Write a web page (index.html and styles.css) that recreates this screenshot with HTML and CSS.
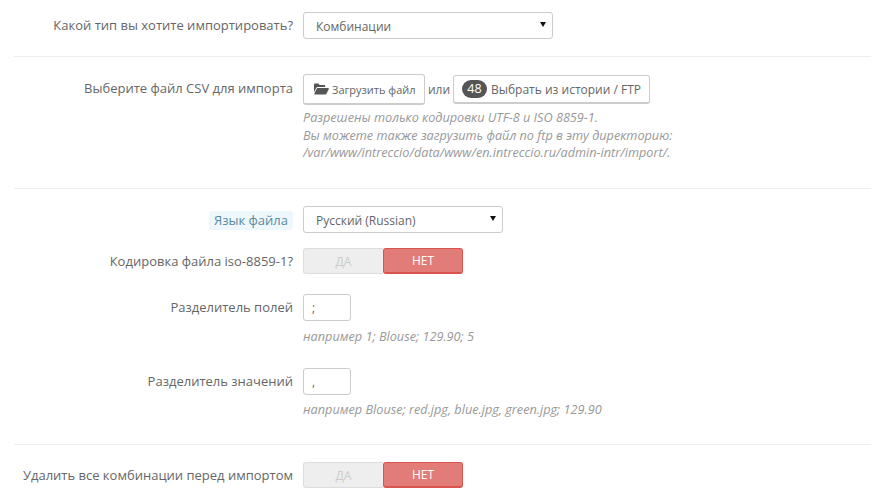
FILE: index.html
```html
<!DOCTYPE html>
<html lang="ru">
<head>
    <meta charset="UTF-8">
    <title>Импорт CSV</title>
    <link rel="stylesheet" href="styles.css">
</head>
<body>

<form class="import-form">
    <div class="row row-first">
        <label class="label">Какой тип вы хотите импортировать?</label>
        <div class="control">
            <div class="select select-wide"><span>Комбинации</span><i class="caret"></i></div>
        </div>
    </div>

    <hr class="divider divider-top">

    <div class="row">
        <label class="label label-file">Выберите файл CSV для импорта</label>
        <div class="control">
            <div class="file-actions">
                <button type="button" class="btn btn-upload">
                    <svg class="folder-icon" width="15" height="12" viewBox="0 0 15 12"><path d="M0 1.6C0 .9.5.5 1.1.5h3c.6 0 1 .4 1.1 1l.1.4h4.900c.6 0 1 .4 1 1V4H3.700C3 4 2.500 4.300 2.200 4.900L0 9.300zM3.600 5h10.500c.6 0 1 .6.700 1.100l-2.300 4.600c-.2.400-.6.800-1.200.8H1c-.6 0-.9-.6-.6-1.100l2.200-4.500C2.800 5.300 3.200 5 3.600 5z" fill="#555"/></svg>
                    Загрузить файл
                </button>
                <span class="or">или</span>
                <button type="button" class="btn btn-history"><span class="badge">48</span> Выбрать из истории / FTP</button>
            </div>
            <p class="help help-file">Разрешены только кодировки UTF-8 и ISO 8859-1.<br>Вы можете также загрузить файл по ftp в эту директорию:<br>/var/www/intreccio/data/www/en.intreccio.ru/admin-intr/import/.</p>
        </div>
    </div>

    <hr class="divider divider-middle">

    <div class="row row-lang">
        <label class="label"><span class="hint">Язык файла</span></label>
        <div class="control">
            <div class="select select-lang"><span>Русский (Russian)</span><i class="caret"></i></div>
        </div>
    </div>

    <div class="row row-iso">
        <label class="label">Кодировка файла iso-8859-1?</label>
        <div class="control">
            <div class="switch"><span class="switch-yes">ДА</span><span class="switch-no">НЕТ</span></div>
        </div>
    </div>

    <div class="row row-sep">
        <label class="label">Разделитель полей</label>
        <div class="control">
            <div class="input-small">;</div>
            <p class="help help-sep">например 1; Blouse; 129.90; 5</p>
        </div>
    </div>

    <div class="row row-values">
        <label class="label">Разделитель значений</label>
        <div class="control">
            <div class="input-small">,</div>
            <p class="help help-values">например Blouse; red.jpg, blue.jpg, green.jpg; 129.90</p>
        </div>
    </div>

    <hr class="divider divider-bottom">

    <div class="row">
        <label class="label">Удалить все комбинации перед импортом</label>
        <div class="control">
            <div class="switch"><span class="switch-yes">ДА</span><span class="switch-no">НЕТ</span></div>
        </div>
    </div>
</form>

</body>
</html>
```

FILE: styles.css
```css
html, body {
    height: 503px;
    overflow: hidden;
}
body {
    margin: 0;
    background-color: #fff;
    font-family: "Open Sans", sans-serif;
    font-size: 12px;
    color: #666;
}
.import-form {
    width: 857px;
    margin-left: 14px;
    padding-top: 12px;
}
.row {
    display: flex;
}
.label {
    width: 279px;
    flex-shrink: 0;
    text-align: right;
    font-size: 13px;
    line-height: 17px;
    padding-top: 5px;
    color: #666;
}
.label-file {
    padding-top: 6px;
}
.control {
    margin-left: 10px;
}
.divider {
    border: none;
    border-top: 1px solid #eee;
    margin: 0;
}
.divider-top {
    margin-top: 17px;
    margin-bottom: 17px;
}
.divider-middle {
    margin-top: 26px;
    margin-bottom: 17px;
}
.divider-bottom {
    margin-top: 27px;
    margin-bottom: 17px;
}
.select {
    display: flex;
    justify-content: space-between;
    box-sizing: border-box;
    height: 27px;
    padding: 0 6px 0 12px;
    line-height: 27px;
    background-color: #fff;
    border: 1px solid #ccc;
    border-radius: 3px;
    color: #666;
}
.select-wide {
    width: 250px;
}
.select-lang {
    width: 200px;
}
.caret {
    width: 0;
    height: 0;
    margin-top: 9px;
    border-left: 3.5px solid transparent;
    border-right: 3.5px solid transparent;
    border-top: 5px solid #111;
}
.file-actions {
    display: flex;
    align-items: center;
}
.btn {
    font-family: inherit;
    font-size: 11px;
    color: #666;
    background-color: #fff;
    border: 1px solid #ccc;
    border-bottom-width: 2px;
    border-radius: 3px;
    padding: 0;
    box-sizing: border-box;
    display: flex;
    align-items: center;
}
.btn-upload {
    width: 122px;
    height: 31px;
    padding-left: 10px;
}
.folder-icon {
    margin-right: 3px;
}
.btn-history {
    width: 197px;
    height: 29px;
    padding-left: 8px;
    font-size: 12px;
}
.or {
    width: 28px;
    text-align: center;
    font-size: 12px;
}
.badge {
    display: block;
    width: 25px;
    height: 18px;
    line-height: 18px;
    margin-right: 4px;
    border-radius: 9px;
    background-color: #555;
    color: #fff;
    text-align: center;
    font-size: 12.5px;
}
.help {
    margin: 0;
    font-style: italic;
    font-size: 12.7px;
    color: #999;
}
.help-file {
    margin-top: 4px;
    line-height: 17.5px;
}
.help-sep {
    margin-top: 7px;
    line-height: 16px;
}
.help-values {
    margin-top: 6px;
    line-height: 16px;
}
.row-iso {
    margin-top: 15px;
}
.hint {
    display: inline-block;
    padding: 0 5px;
    background-color: #eef7fb;
    border-radius: 3px;
    color: #5a8a9e;
    line-height: 19px;
}
.row-sep {
    margin-top: 20px;
}
.row-values {
    margin-top: 24px;
}
.switch {
    display: flex;
    width: 160px;
    height: 26px;
    line-height: 26px;
    text-align: center;
    font-size: 12px;
}
.switch-yes {
    width: 80px;
    background-color: #eee;
    border: 1px solid #ddd;
    border-right: none;
    border-radius: 3px 0 0 3px;
    box-sizing: border-box;
    color: #ccc;
}
.switch-no {
    width: 80px;
    background-color: #e27c79;
    border: 1px solid #d9534f;
    border-bottom-width: 2px;
    border-radius: 3px;
    box-sizing: border-box;
    color: #fff;
    line-height: 24px;
}
.input-small {
    box-sizing: border-box;
    width: 48px;
    height: 27px;
    padding-left: 8px;
    line-height: 25px;
    border: 1px solid #ccc;
    border-radius: 3px;
    color: #666;
}
```
